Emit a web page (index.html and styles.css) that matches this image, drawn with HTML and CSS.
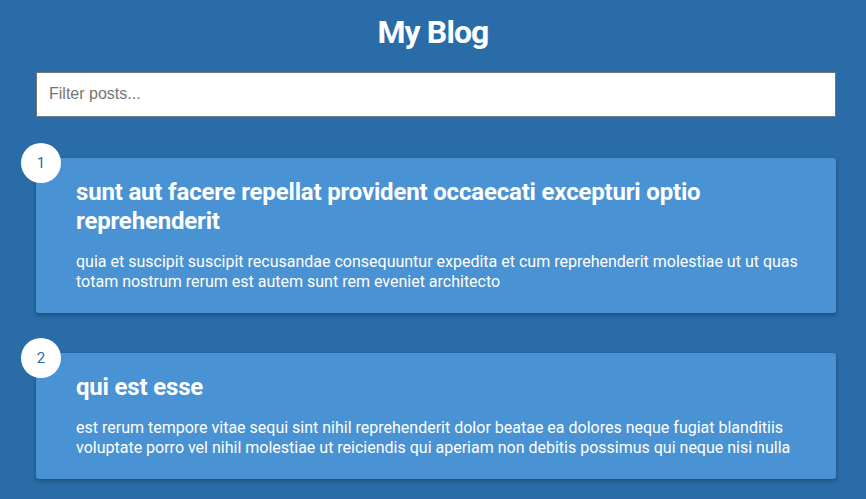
FILE: index.html
```html
<!DOCTYPE html>
<html lang="en">
<head>
<meta charset="UTF-8">
<title>My Blog</title>
<link rel="stylesheet" href="styles.css">
</head>
<body>
  <header class="header">
    <h1 class="title">My Blog</h1>
  </header>
  <main class="content">
    <div class="filter-container">
      <input type="text" class="filter" placeholder="Filter posts...">
    </div>
    <div class="posts">
      <article class="post">
        <div class="number">1</div>
        <div class="post-info">
          <h2 class="post-title">sunt aut facere repellat provident occaecati excepturi optio reprehenderit</h2>
          <p class="post-body">quia et suscipit suscipit recusandae consequuntur expedita et cum reprehenderit molestiae ut ut quas totam nostrum rerum est autem sunt rem eveniet architecto</p>
        </div>
      </article>
      <article class="post">
        <div class="number">2</div>
        <div class="post-info">
          <h2 class="post-title">qui est esse</h2>
          <p class="post-body">est rerum tempore vitae sequi sint nihil reprehenderit dolor beatae ea dolores neque fugiat blanditiis voluptate porro vel nihil molestiae ut reiciendis qui aperiam non debitis possimus qui neque nisi nulla</p>
        </div>
      </article>
    </div>
  </main>
</body>
</html>
```
FILE: styles.css
```css
* {
  box-sizing: border-box;
}

html, body {
  margin: 0;
}

body {
  background-color: #296ca8;
  color: #fff;
  font-family: Roboto, "Noto Sans", sans-serif;
  min-height: 100vh;
  overflow: hidden;
}

.header {
  text-align: center;
}

.title {
  font-size: 32px;
  font-weight: 700;
  margin: 14px 0 0;
  line-height: 37.5px;
  letter-spacing: -0.9px;
}

.content {
  width: 800px;
  margin: 0 30px 0 36px;
}

.filter-container {
  margin-top: 20px;
}

.filter {
  display: block;
  width: 100%;
  height: 45px;
  padding: 0 12px;
  font-size: 16px;
  font-family: "Liberation Sans", Arial, sans-serif;
  border: 1px solid #767676;
  background: #fff;
  color: #000;
  outline: none;
}

.filter::placeholder {
  color: #757575;
}

.posts {
  padding-top: 41px;
  display: flex;
  flex-direction: column;
  gap: 40px;
}

.post {
  position: relative;
  background-color: #4992d3;
  box-shadow: 0 2px 4px rgba(0, 0, 0, 0.3);
  border-radius: 3px;
  padding: 20px;
  display: flex;
}

.post-info {
  margin-left: 20px;
}

.post-title {
  margin: 0;
  font-size: 24px;
  font-weight: 700;
  line-height: 29.5px;
  letter-spacing: -0.18px;
}

.post-body {
  margin: 15px 0 0;
  font-size: 16px;
  line-height: 1.3;
}

.number {
  position: absolute;
  top: -15px;
  left: -15px;
  width: 40px;
  height: 40px;
  border-radius: 50%;
  background: #fff;
  color: #296ca8;
  font-size: 15px;
  display: flex;
  align-items: center;
  justify-content: center;
}
```
